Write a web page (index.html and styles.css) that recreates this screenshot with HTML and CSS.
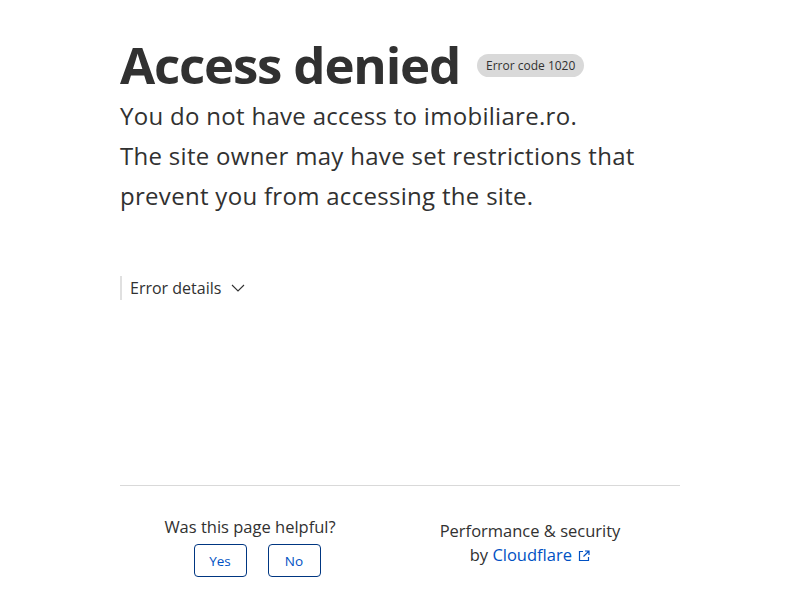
FILE: index.html
```html
<!DOCTYPE html>
<html lang="en">
<head>
<meta charset="utf-8">
<title>Access denied</title>
<link rel="stylesheet" href="styles.css">
</head>
<body>
<main class="page">
  <div class="title-row">
    <h1 class="title">Access denied</h1>
    <span class="badge">Error code 1020</span>
  </div>
  <p class="lead">You do not have access to imobiliare.ro.<br>The site owner may have set restrictions that prevent you from accessing the site.</p>
  <div class="details">
    <span>Error details</span>
    <svg class="chev" width="14" height="8" viewBox="0 0 14 8"><path d="M1 1l6 6 6-6" fill="none" stroke="#313131" stroke-width="1.1"/></svg>
  </div>
  <footer class="footer">
    <div class="col">
      <div class="q">Was this page helpful?</div>
      <div class="btns">
        <button class="btn">Yes</button>
        <button class="btn">No</button>
      </div>
    </div>
    <div class="col perf">
      <div>Performance &amp; security</div>
      <div>by <a class="cf" href="#">Cloudflare</a> <svg class="ext" width="12" height="12" viewBox="0 0 12 12"><path d="M5 1.5H1.5v9h9V7" fill="none" stroke="#0051c3" stroke-width="1.2"/><path d="M7 1h4v4M11 1L5.5 6.5" fill="none" stroke="#0051c3" stroke-width="1.2"/></svg></div>
    </div>
  </footer>
</main>
</body>
</html>
```

FILE: styles.css
```css
html, body {
  margin: 0;
  padding: 0;
  background: #fff;
}
body {
  font-family: "Open Sans", "Noto Sans", sans-serif;
  color: #313131;
}
.page {
  width: 560px;
  margin: 0 auto;
  padding-top: 32px;
}
.title-row {
  display: flex;
  align-items: center;
  gap: 17px;
}
.title {
  margin: 0;
  font-size: 51px;
  font-weight: 700;
  line-height: 64px;
  letter-spacing: -1.2px;
}
.badge {
  background: #d9d9d9;
  border-radius: 12px;
  font-size: 12px;
  line-height: 23px;
  padding: 0 9px;
  margin-top: 3px;
}
.lead {
  margin: 0;
  font-size: 24px;
  line-height: 40px;
  letter-spacing: 0.3px;
}
.details {
  margin-top: 60px;
  border-left: 2px solid #e0e0e0;
  padding-left: 8px;
  height: 24px;
  display: flex;
  align-items: center;
  gap: 10px;
  font-size: 16px;
}
.footer {
  margin-top: 185px;
  border-top: 1px solid #d9d9d9;
  padding-top: 30px;
  display: grid;
  grid-template-columns: 260px 260px;
  column-gap: 20px;
  text-align: center;
  font-size: 16.5px;
}
.q { line-height: 22px; }
.btns {
  display: flex;
  justify-content: center;
  gap: 21px;
  margin-top: 6px;
  padding-left: 14px;
}
.btn {
  width: 53px;
  height: 33px;
  border: 1px solid #003681;
  border-radius: 4px;
  background: #fff;
  color: #0051c3;
  font-family: inherit;
  font-size: 13.5px;
  padding: 0;
}
.perf {
  line-height: 24px;
  padding-top: 3px;
}
.cf { color: #0051c3; text-decoration: none; }
.ext { vertical-align: -1px; margin-left: 2px; }
```
